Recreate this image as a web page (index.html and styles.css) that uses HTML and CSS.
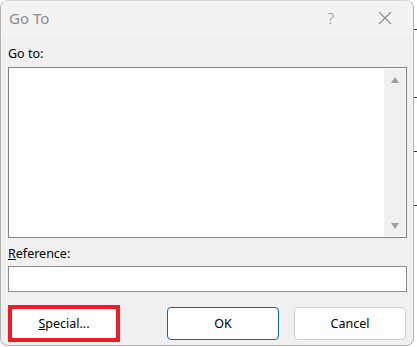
FILE: index.html
```html
<!DOCTYPE html>
<html>
<head>
<meta charset="utf-8">
<link rel="stylesheet" href="styles.css">
</head>
<body>
<div class="window">
  <div class="titlebar">
    <span class="title">Go To</span>
    <span class="help">?</span>
    <span class="close">
      <svg width="14" height="14" viewBox="0 0 14 14"><path d="M1 1 L13 13 M13 1 L1 13" stroke="#8a8a8a" stroke-width="1.1" fill="none"/></svg>
    </span>
  </div>
  <div class="content">
    <label class="label goto-label">Go to:</label>
    <div class="listbox">
      <div class="list-area"></div>
      <div class="scrollbar">
        <svg width="10" height="8" viewBox="0 0 10 8"><path d="M5 1 L9 7 L1 7 Z" fill="#a0a0a0"/></svg>
        <svg width="10" height="8" viewBox="0 0 10 8"><path d="M1 1 L9 1 L5 7 Z" fill="#a0a0a0"/></svg>
      </div>
    </div>
    <label class="label ref-label"><u>R</u>eference:</label>
    <div class="input"></div>
    <div class="buttons">
      <div class="special-wrap"><button class="btn special"><u>S</u>pecial...</button></div>
      <button class="btn ok">OK</button>
      <button class="btn cancel">Cancel</button>
    </div>
  </div>
</div>
</body>
</html>
```
FILE: styles.css
```css
html, body {
  margin: 0;
  padding: 0;
  background: #ffffff;
}
body {
  width: 417px;
  height: 347px;
  overflow: hidden;
  font-family: "Segoe UI", "Noto Sans", "Open Sans", sans-serif;
  color: #000;
  background:
    linear-gradient(#333, #333) 414px 97px / 3px 1px no-repeat,
    linear-gradient(#333, #333) 414px 151px / 3px 1px no-repeat,
    linear-gradient(#333, #333) 414px 205px / 3px 1px no-repeat,
    linear-gradient(#333, #333) 414px 29px / 3px 1px no-repeat,
    #ffffff;
}
.window {
  box-sizing: border-box;
  width: 414px;
  height: 346px;
  background: #f0f0f0;
  border: 1px solid #b4b4b4;
  border-top-color: #d6d6d6;
  border-radius: 8px;
  overflow: hidden;
  display: flex;
  flex-direction: column;
}
.titlebar {
  height: 36px;
  flex: none;
  background: #f3f3f3;
  display: flex;
  align-items: center;
  padding: 0 0 0 8px;
  box-sizing: border-box;
}
.title {
  font-size: 15px;
  color: #8c8c8c;
  flex: 1;
  margin-top: -2px;
}
.help {
  font-size: 15px;
  font-weight: 300;
  color: #8c8c8c;
  width: 20px;
  margin-right: 37px;
  text-align: center;
  margin-top: -2px;
}
.close {
  width: 14px;
  height: 14px;
  margin-right: 21px;
  display: flex;
  margin-top: -2px;
}
.content {
  padding: 0 6px 0 7px;
  display: flex;
  flex-direction: column;
}
.label {
  font-size: 12.5px;
  line-height: 17px;
  display: block;
}
.goto-label {
  margin-top: 8px;
  margin-bottom: 5px;
}
.listbox {
  height: 171px;
  box-sizing: border-box;
  border: 1px solid #828282;
  background: #fff;
  display: flex;
}
.list-area {
  flex: 1;
}
.scrollbar {
  width: 21px;
  background: #f0f0f0;
  margin: 1px 1px 1px 0;
  display: flex;
  flex-direction: column;
  justify-content: space-between;
  align-items: center;
  padding: 7px 0 6px;
}
.ref-label {
  margin-top: 7px;
  margin-bottom: 4px;
}
.input {
  height: 26px;
  box-sizing: border-box;
  border: 1px solid #8d8d8d;
  background: #fff;
}
.buttons {
  display: flex;
  align-items: center;
  margin-top: 13px;
}
.btn {
  font-family: inherit;
  font-size: 12.5px;
  height: 33px;
  width: 112px;
  box-sizing: border-box;
  background: #fdfdfd;
  border: 1px solid #d0d0d0;
  border-radius: 4px;
  color: #000;
  padding: 0;
}
.special-wrap {
  border: 4px solid #ed1c24;
  width: 112px;
  height: 37px;
  box-sizing: border-box;
  background: #fff;
  display: flex;
  align-items: center;
}
.special {
  border: none;
  background: #fff;
  width: 100%;
  height: 100%;
}
.ok {
  margin-left: 47px;
  border: 1px solid #0067c0;
}
.cancel {
  margin-left: 15px;
}
```
